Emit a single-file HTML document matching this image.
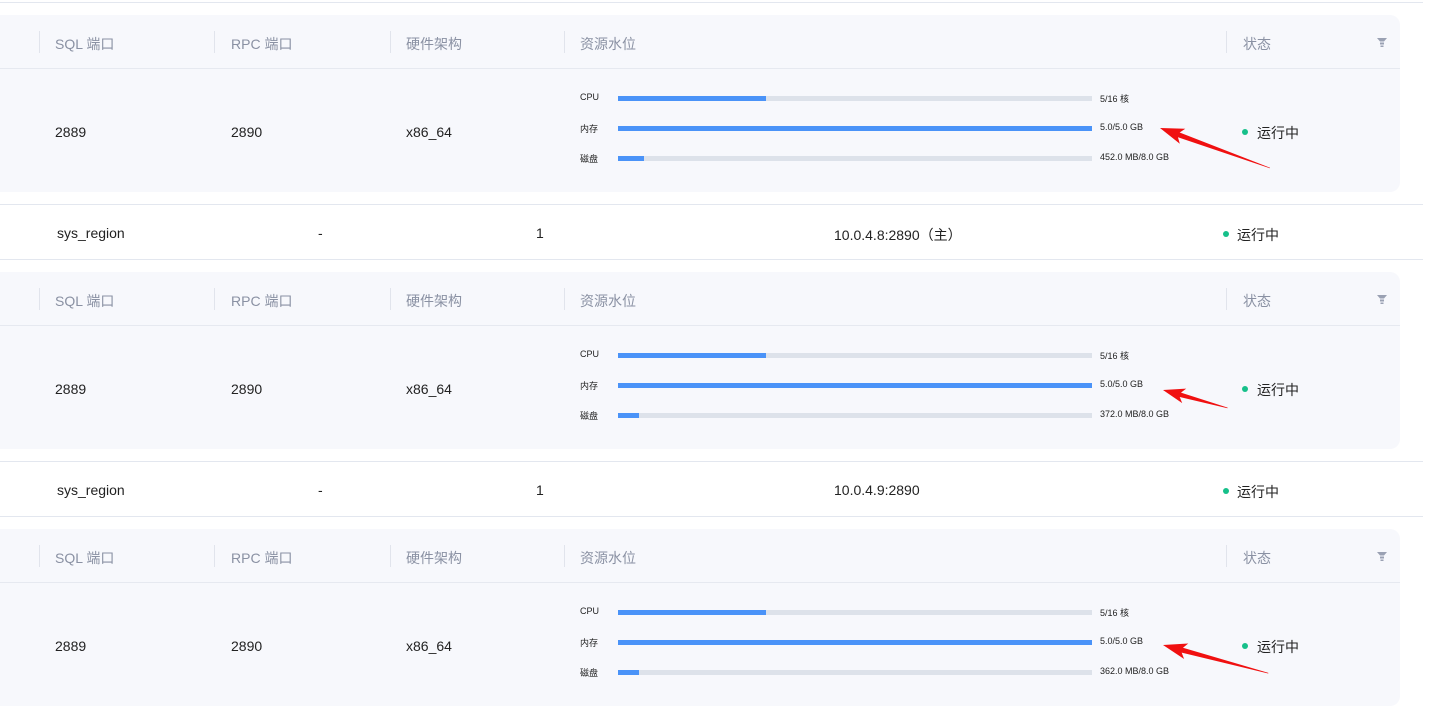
<!DOCTYPE html>
<html><head><meta charset="utf-8"><style>
*{margin:0;padding:0;box-sizing:border-box}
body{width:1438px;height:713px;background:#fff;position:relative;overflow:hidden;font-family:"Liberation Sans","Noto Sans CJK SC",sans-serif;}
.a{position:absolute}
.hl{position:absolute;left:0;width:1423px;height:1px;background:#e3e7ef}
.card{position:absolute;left:0;width:1400px;height:177px;background:#f7f8fc;border-radius:0 10px 10px 0}
.hd{position:absolute;top:0;left:0;right:0;height:54px;border-bottom:1px solid #e6e9f0}
.sep{position:absolute;top:16px;width:1px;height:22px;background:#e1e4ec}
.th{position:absolute;top:19px;font-size:14px;color:#8a91a3}
.td{position:absolute;font-size:14px;color:#222}
.lbl{position:absolute;left:580px;font-size:9px;color:#222}
.bar{position:absolute;left:618px;width:474px;height:5px;background:#dde2ea}
.bar i{display:block;height:5px;background:#4a93f8}
.val{position:absolute;left:1100px;font-size:9px;color:#222}
.dot{position:absolute;width:6px;height:6px;border-radius:3px;background:#16c08a}
.st{position:absolute;font-size:14px;color:#222}
.filt{position:absolute;left:1377px;top:23px;width:10px;height:10px}
.rt{position:absolute;font-size:14px;color:#222}
</style></head><body>
<div class="hl" style="top:2px"></div>

<!-- card template repeated -->
<div class="card" style="top:15px">
 <div class="hd">
  <div class="sep" style="left:39px"></div><div class="th" style="left:55px">SQL 端口</div>
  <div class="sep" style="left:214px"></div><div class="th" style="left:231px">RPC 端口</div>
  <div class="sep" style="left:390px"></div><div class="th" style="left:406px">硬件架构</div>
  <div class="sep" style="left:564px"></div><div class="th" style="left:580px">资源水位</div>
  <div class="sep" style="left:1226px"></div><div class="th" style="left:1243px">状态</div>
  <svg class="filt" viewBox="0 0 10 10"><path d="M0,0H10L7,3.5H3Z M3,4.5H7V6.5H3Z M3.5,7.5H6.5V9H3.5Z" fill="#9aa1b3"/></svg>
 </div>
 <div class="td" style="left:55px;top:109px">2889</div>
 <div class="td" style="left:231px;top:109px">2890</div>
 <div class="td" style="left:406px;top:109px">x86_64</div>
 <div class="lbl" style="top:77px">CPU</div><div class="bar" style="top:81px"><i style="width:148px"></i></div><div class="val" style="top:77px">5/16 核</div>
 <div class="lbl" style="top:107px">内存</div><div class="bar" style="top:111px"><i style="width:474px"></i></div><div class="val" style="top:107px">5.0/5.0 GB</div>
 <div class="lbl" style="top:137px">磁盘</div><div class="bar" style="top:141px"><i style="width:26px"></i></div><div class="val" style="top:137px">452.0 MB/8.0 GB</div>
 <div class="dot" style="left:1242px;top:114px"></div><div class="st" style="left:1257px;top:108px">运行中</div>
</div>
<div class="hl" style="top:204px"></div>
<div class="rt" style="left:57px;top:225px">sys_region</div>
<div class="rt" style="left:318px;top:225px">-</div>
<div class="rt" style="left:536px;top:225px">1</div>
<div class="rt" style="left:834px;top:225px">10.0.4.8:2890（主）</div>
<div class="dot" style="left:1223px;top:231px"></div><div class="st" style="left:1237px;top:225px">运行中</div>
<div class="hl" style="top:259px"></div>

<div class="card" style="top:272px">
 <div class="hd">
  <div class="sep" style="left:39px"></div><div class="th" style="left:55px">SQL 端口</div>
  <div class="sep" style="left:214px"></div><div class="th" style="left:231px">RPC 端口</div>
  <div class="sep" style="left:390px"></div><div class="th" style="left:406px">硬件架构</div>
  <div class="sep" style="left:564px"></div><div class="th" style="left:580px">资源水位</div>
  <div class="sep" style="left:1226px"></div><div class="th" style="left:1243px">状态</div>
  <svg class="filt" viewBox="0 0 10 10"><path d="M0,0H10L7,3.5H3Z M3,4.5H7V6.5H3Z M3.5,7.5H6.5V9H3.5Z" fill="#9aa1b3"/></svg>
 </div>
 <div class="td" style="left:55px;top:109px">2889</div>
 <div class="td" style="left:231px;top:109px">2890</div>
 <div class="td" style="left:406px;top:109px">x86_64</div>
 <div class="lbl" style="top:77px">CPU</div><div class="bar" style="top:81px"><i style="width:148px"></i></div><div class="val" style="top:77px">5/16 核</div>
 <div class="lbl" style="top:107px">内存</div><div class="bar" style="top:111px"><i style="width:474px"></i></div><div class="val" style="top:107px">5.0/5.0 GB</div>
 <div class="lbl" style="top:137px">磁盘</div><div class="bar" style="top:141px"><i style="width:21px"></i></div><div class="val" style="top:137px">372.0 MB/8.0 GB</div>
 <div class="dot" style="left:1242px;top:114px"></div><div class="st" style="left:1257px;top:108px">运行中</div>
</div>
<div class="hl" style="top:461px"></div>
<div class="rt" style="left:57px;top:482px">sys_region</div>
<div class="rt" style="left:318px;top:482px">-</div>
<div class="rt" style="left:536px;top:482px">1</div>
<div class="rt" style="left:834px;top:482px">10.0.4.9:2890</div>
<div class="dot" style="left:1223px;top:488px"></div><div class="st" style="left:1237px;top:482px">运行中</div>
<div class="hl" style="top:516px"></div>

<div class="card" style="top:529px">
 <div class="hd">
  <div class="sep" style="left:39px"></div><div class="th" style="left:55px">SQL 端口</div>
  <div class="sep" style="left:214px"></div><div class="th" style="left:231px">RPC 端口</div>
  <div class="sep" style="left:390px"></div><div class="th" style="left:406px">硬件架构</div>
  <div class="sep" style="left:564px"></div><div class="th" style="left:580px">资源水位</div>
  <div class="sep" style="left:1226px"></div><div class="th" style="left:1243px">状态</div>
  <svg class="filt" viewBox="0 0 10 10"><path d="M0,0H10L7,3.5H3Z M3,4.5H7V6.5H3Z M3.5,7.5H6.5V9H3.5Z" fill="#9aa1b3"/></svg>
 </div>
 <div class="td" style="left:55px;top:109px">2889</div>
 <div class="td" style="left:231px;top:109px">2890</div>
 <div class="td" style="left:406px;top:109px">x86_64</div>
 <div class="lbl" style="top:77px">CPU</div><div class="bar" style="top:81px"><i style="width:148px"></i></div><div class="val" style="top:77px">5/16 核</div>
 <div class="lbl" style="top:107px">内存</div><div class="bar" style="top:111px"><i style="width:474px"></i></div><div class="val" style="top:107px">5.0/5.0 GB</div>
 <div class="lbl" style="top:137px">磁盘</div><div class="bar" style="top:141px"><i style="width:21px"></i></div><div class="val" style="top:137px">362.0 MB/8.0 GB</div>
 <div class="dot" style="left:1242px;top:114px"></div><div class="st" style="left:1257px;top:108px">运行中</div>
</div>

<svg class="a" style="left:0;top:0" width="1438" height="713">
 <g fill="#f01010">
  <path transform="translate(1160,128) rotate(20)" d="M0,0 L24,-8 L20,-2.5 L117,-0.3 L117,0.3 L20,2.5 L24,8 Z"/>
  <path transform="translate(1163,390) rotate(15.5)" d="M0,0 L22,-7.5 L18,-2.3 L67,-0.3 L67,0.3 L18,2.3 L22,7.5 Z"/>
  <path transform="translate(1163,645) rotate(15)" d="M0,0 L24,-8 L20,-2.5 L109,-0.3 L109,0.3 L20,2.5 L24,8 Z"/>
 </g>
</svg>
</body></html>
